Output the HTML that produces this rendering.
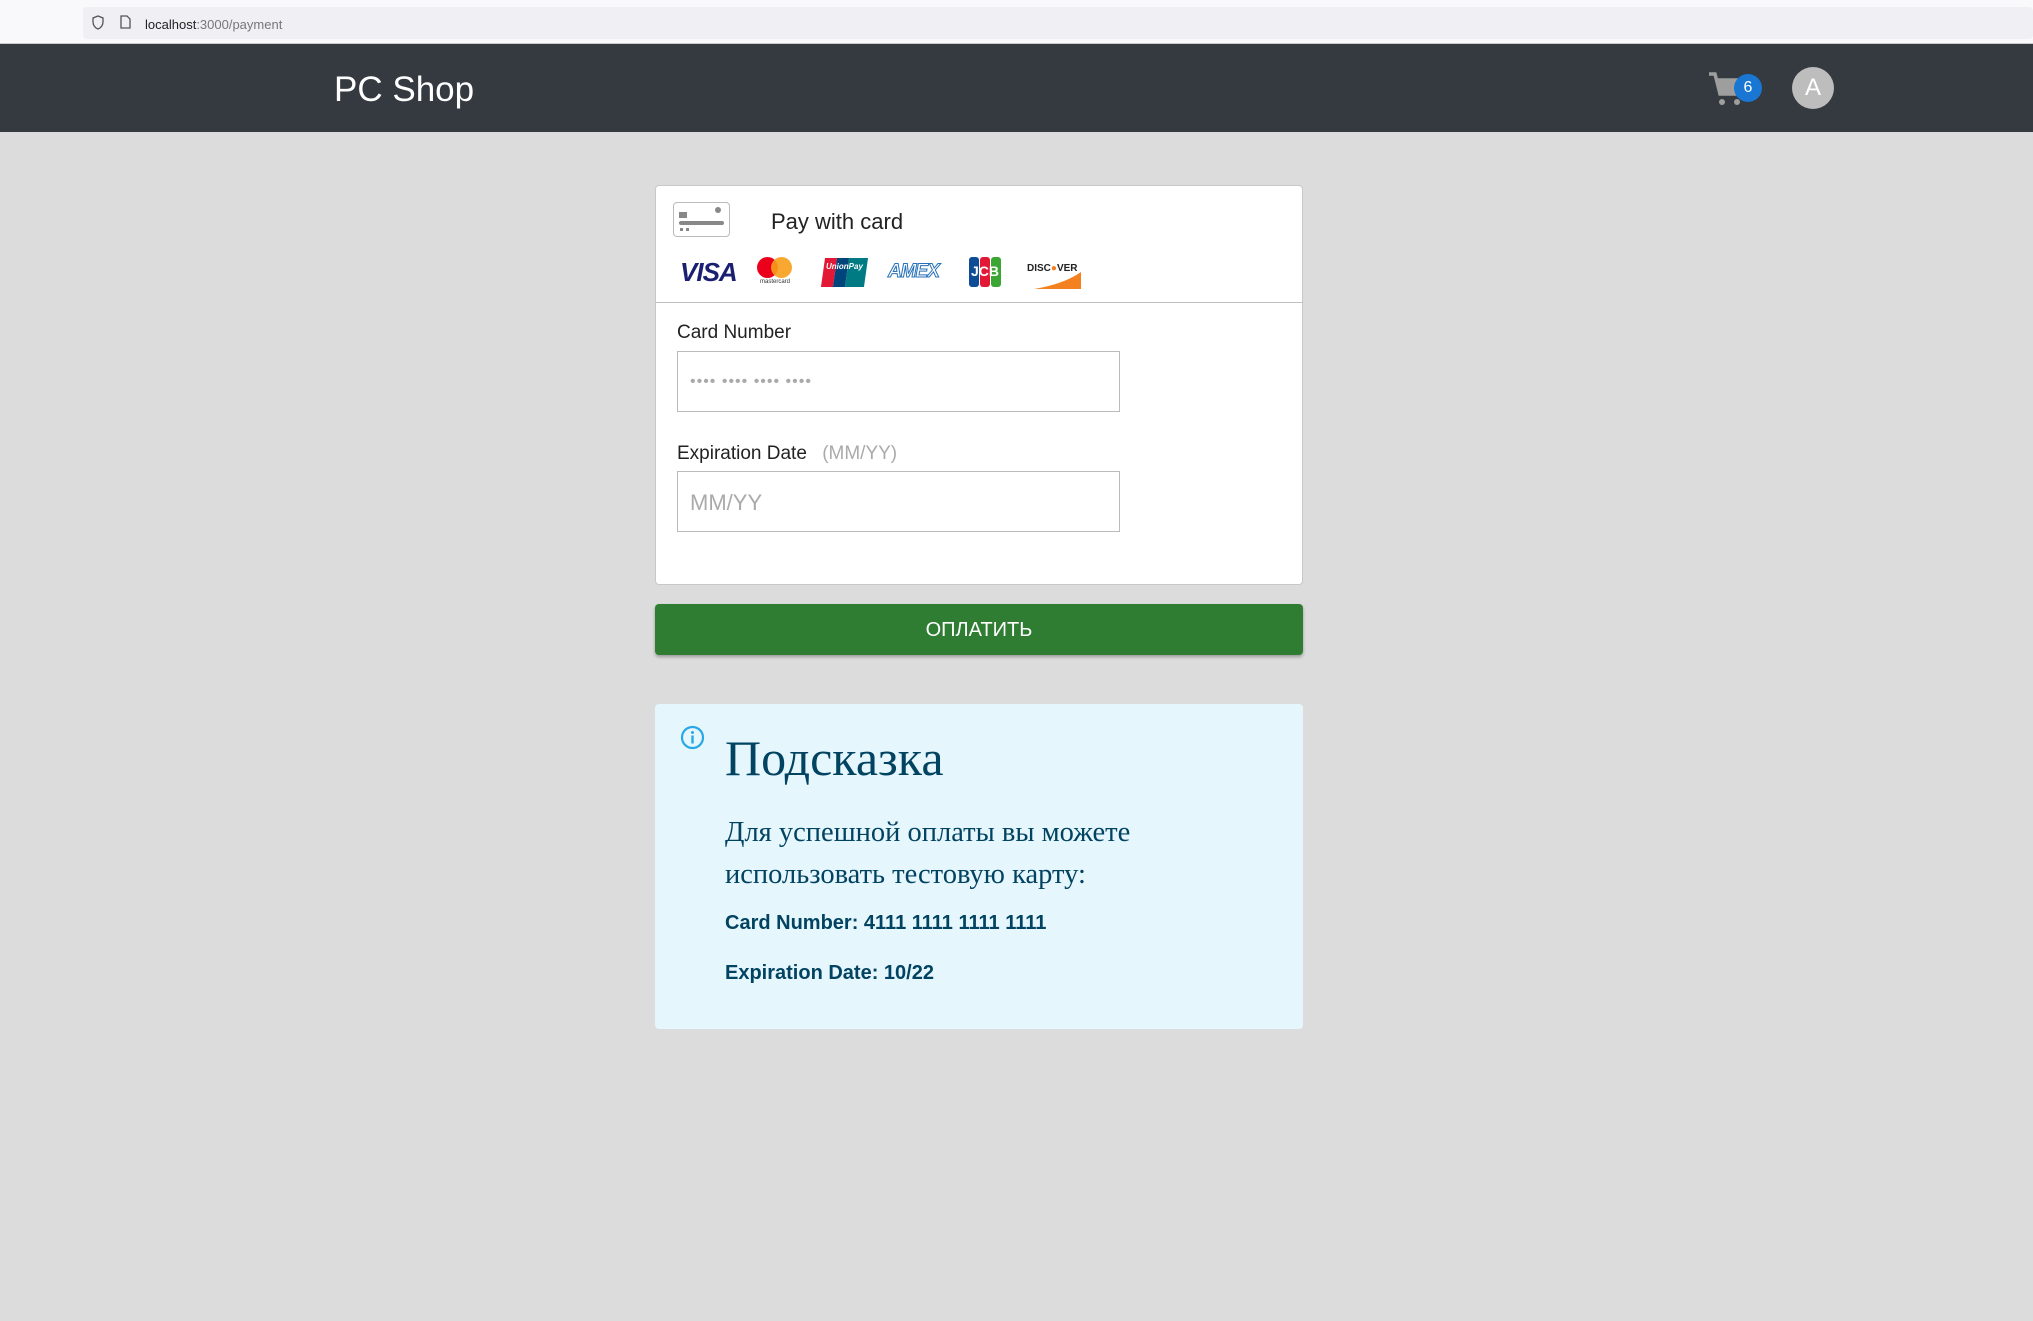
<!DOCTYPE html>
<html><head><meta charset="utf-8"><style>
*{box-sizing:border-box;margin:0;padding:0}
body{width:2033px;height:1321px;background:#dcdcdc;font-family:"Liberation Sans",sans-serif;position:relative;overflow:hidden}
.abs{position:absolute}
</style></head><body>
<div class="abs" style="left:0;top:0;width:2033px;height:44px;background:#f9f9fb;border-bottom:1px solid #ccc"></div>
<div class="abs" style="left:83px;top:7px;width:1950px;height:32px;background:#f0f0f4;border-radius:4px"></div>
<svg class="abs" style="left:92px;top:15px" width="12" height="15" viewBox="0 0 12 15"><path d="M6 1L1 3v4c0 3 2 6 5 7 3-1 5-4 5-7V3z" fill="none" stroke="#555" stroke-width="1.3"/></svg>
<svg class="abs" style="left:120px;top:15px" width="11" height="14" viewBox="0 0 11 14"><path d="M1 1h6l3 3v9H1z" fill="none" stroke="#555" stroke-width="1.3"/></svg>
<div class="abs" style="left:145px;top:17px;font-size:13px;color:#222">localhost<span style="color:#777">:3000/payment</span></div>

<div class="abs" style="left:0;top:44px;width:2033px;height:88px;background:#343a40"></div>
<div class="abs" style="left:334px;top:70px;font-size:35px;color:#fff">PC Shop</div>
<svg class="abs" style="left:1707px;top:71px" width="40" height="36" viewBox="0 0 40 36"><path d="M2 3h6l5 20h20l4-14H11" fill="none" stroke="#9e9e9e" stroke-width="3.5"/><path d="M11 9h26l-4 14H13z" fill="#9e9e9e"/><circle cx="15" cy="31" r="3" fill="#9e9e9e"/><circle cx="30" cy="31" r="3" fill="#9e9e9e"/></svg>
<div class="abs" style="left:1734px;top:74px;width:28px;height:28px;border-radius:50%;background:#1976d2;color:#fff;font-size:16px;text-align:center;line-height:28px">6</div>
<div class="abs" style="left:1792px;top:67px;width:42px;height:42px;border-radius:50%;background:#bdbdbd;color:#fff;font-size:24px;text-align:center;line-height:42px">A</div>

<div class="abs" style="left:655px;top:185px;width:648px;height:400px;background:#fff;border:1px solid #c8c8c8;border-radius:4px"></div>
<div class="abs" style="left:655px;top:302px;width:648px;height:1px;background:#c0c0c0"></div>
<div class="abs" style="left:673px;top:202px;width:57px;height:35px;border:1px solid #bbb;border-radius:4px;background:#fff"></div>
<div class="abs" style="left:679px;top:212px;width:8px;height:6px;background:#888"></div>
<div class="abs" style="left:679px;top:221px;width:45px;height:4px;background:#888;border-radius:2px"></div>
<div class="abs" style="left:715px;top:207px;width:6px;height:6px;background:#888;border-radius:50%"></div>
<div class="abs" style="left:680px;top:228px;width:3px;height:3px;background:#888"></div><div class="abs" style="left:686px;top:228px;width:3px;height:3px;background:#888"></div>
<div class="abs" style="left:771px;top:209px;font-size:22px;color:#222">Pay with card</div>

<div class="abs" style="left:680px;top:257px;font-size:26px;font-weight:bold;font-style:italic;color:#1a1f71;letter-spacing:-1px">VISA</div>
<div class="abs" style="left:757px;top:257px;width:21px;height:21px;border-radius:50%;background:#eb001b"></div>
<div class="abs" style="left:771px;top:257px;width:21px;height:21px;border-radius:50%;background:#f79e1b;opacity:.9"></div>
<div class="abs" style="left:760px;top:279px;font-size:6px;color:#333">mastercard</div>
<div class="abs" style="left:823px;top:258px;width:12px;height:29px;background:#e21836;transform:skewX(-8deg)"></div>
<div class="abs" style="left:835px;top:258px;width:12px;height:29px;background:#00447c;transform:skewX(-8deg)"></div>
<div class="abs" style="left:847px;top:258px;width:19px;height:29px;background:#007b84;transform:skewX(-8deg)"></div>
<div class="abs" style="left:826px;top:262px;font-size:8px;color:#fff;font-style:italic;font-weight:bold">UnionPay</div>
<div class="abs" style="left:888px;top:261px;font-size:19px;font-weight:bold;font-style:italic;color:#fff;-webkit-text-stroke:1px #2671b9;letter-spacing:-1px">AMEX</div>
<div class="abs" style="left:969px;top:257px;width:10px;height:30px;background:#0e4c96;border-radius:3px"></div>
<div class="abs" style="left:980px;top:257px;width:10px;height:30px;background:#e21836;border-radius:3px"></div>
<div class="abs" style="left:991px;top:257px;width:10px;height:30px;background:#3ba634;border-radius:3px"></div>
<div class="abs" style="left:969px;top:263px;width:32px;font-size:14px;color:#fff;font-weight:bold;text-align:center">JCB</div>
<div class="abs" style="left:1027px;top:263px;font-size:10px;font-weight:bold;color:#222">DISC<span style="color:#f48120">●</span>VER</div>
<svg class="abs" style="left:1034px;top:272px" width="47" height="17"><path d="M0 17Q30 12 47 0V17z" fill="#f48120"/></svg>

<div class="abs" style="left:677px;top:322px;font-size:19px;color:#222">Card Number</div>
<div class="abs" style="left:677px;top:351px;width:443px;height:61px;border:1px solid #bbb;background:#fff"></div>
<div class="abs" style="left:690px;top:373px;font-size:16px;color:#aaa;letter-spacing:1px">•••• •••• •••• ••••</div>
<div class="abs" style="left:677px;top:443px;font-size:19px;color:#222">Expiration Date <span style="color:#aaa;margin-left:10px">(MM/YY)</span></div>
<div class="abs" style="left:677px;top:471px;width:443px;height:61px;border:1px solid #bbb;background:#fff"></div>
<div class="abs" style="left:690px;top:490px;font-size:22px;color:#aaa">MM/YY</div>

<div class="abs" style="left:655px;top:604px;width:648px;height:51px;background:#2e7d32;border-radius:4px;box-shadow:0 2px 3px rgba(0,0,0,.3);color:#fff;font-size:20px;text-align:center;line-height:52px">ОПЛАТИТЬ</div>

<div class="abs" style="left:655px;top:704px;width:648px;height:325px;background:#e5f6fd;border-radius:4px"></div>
<svg class="abs" style="left:680px;top:725px" width="25" height="25" viewBox="0 0 25 25"><circle cx="12.5" cy="12.5" r="10.5" fill="none" stroke="#29a8e6" stroke-width="2.2"/><circle cx="12.5" cy="7.5" r="1.5" fill="#29a8e6"/><rect x="11.3" y="10.5" width="2.4" height="8" fill="#29a8e6"/></svg>
<div class="abs" style="left:725px;top:729px;font-family:'Liberation Serif',serif;font-size:50px;color:#014361">Подсказка</div>
<div class="abs" style="left:725px;top:812px;width:560px;font-family:'Liberation Serif',serif;font-size:28.5px;line-height:42px;color:#014361">Для успешной оплаты вы можете использовать тестовую карту:</div>
<div class="abs" style="left:725px;top:912px;font-size:20px;font-weight:bold;color:#014361">Card Number: 4111 1111 1111 1111</div>
<div class="abs" style="left:725px;top:962px;font-size:20px;font-weight:bold;color:#014361">Expiration Date: 10/22</div>
</body></html>
